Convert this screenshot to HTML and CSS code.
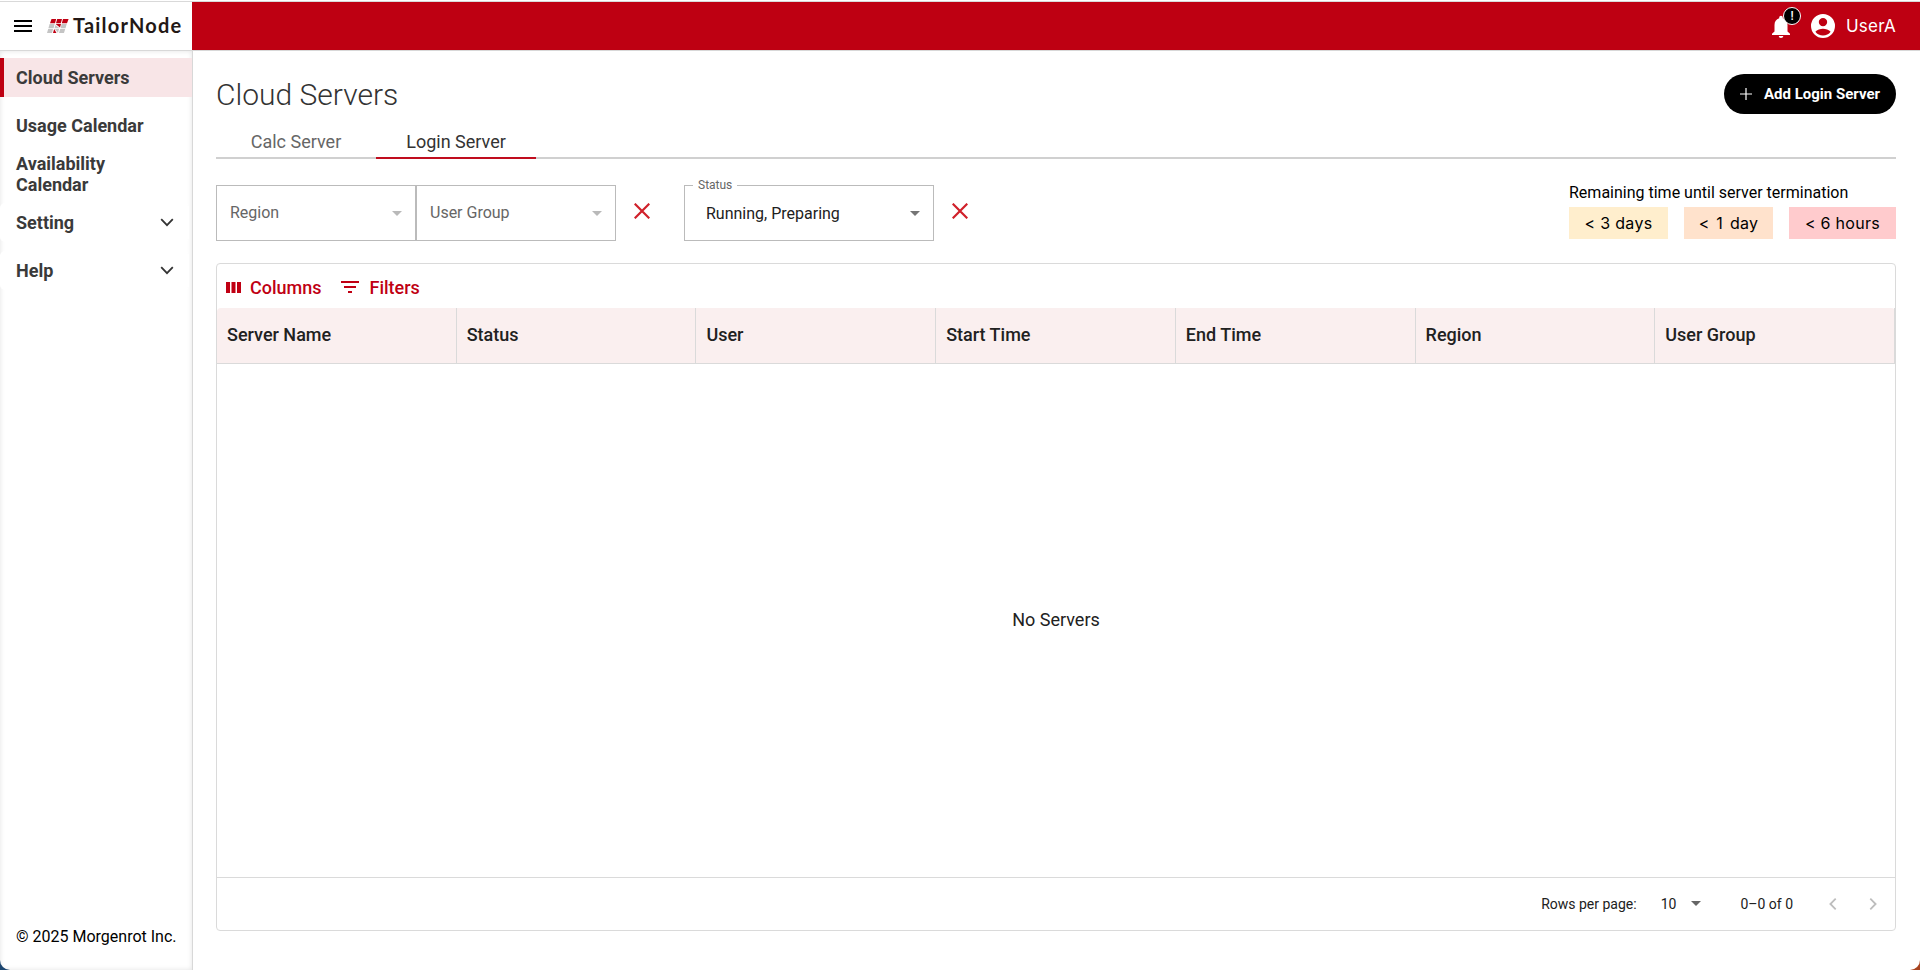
FILE: index.html
```html
<!DOCTYPE html>
<html lang="en">
<head>
<meta charset="utf-8">
<title>TailorNode</title>
<link rel="stylesheet" href="styles.css">
</head>
<body>
<div class="window">
  <header class="topbar">
    <div class="brand">
      <svg class="burger" width="18" height="12" viewBox="0 0 18 12"><path d="M0 0h18v2H0zM0 5h18v2H0zM0 10h18v2H0z"/></svg>
      <svg class="mark" width="22" height="14" viewBox="0 0 22 14">
        <path fill="#c00013" d="M4.5 0H9.2L8 4.3H3zM10.2 0H15L13.8 4.3H9zM16 0H21.6L20 4.3H14.8zM8.6 5H14L13 8.5 10.5 6.5zM7.2 10L9.5 14H6z"/>
        <path fill="#c4c4c4" d="M2.6 5H7.6L6.6 9.2H1.4zM1.2 10H6L5 14H0zM14.6 5H19.7L18.5 9.2H13.6zM13.2 10H18.2L17 14H12zM8.4 6L12.5 9.2H7.5zM8 10H12L11 14z"/>
      </svg>
      <span class="wordmark">TailorNode</span>
    </div>
    <div class="account">
      <span class="bell">
        <svg width="24" height="24" viewBox="0 0 24 24"><path d="M12 24c1.3 0 2.2-.8 2.3-2H9.700c.1 1.200 1 2 2.300 2zM18.500 17.500V11c0-3.300-1.700-6-4.700-6.700V3.500a1.800 1.800 0 0 0-3.600 0v.8C7.200 5 5.500 7.700 5.500 11v6.500L3 19.800V21h18v-1.200z"/></svg>
        <span class="alert">!</span>
      </span>
      <svg class="avatar" width="24" height="24" viewBox="0 0 24 24"><path fill-rule="evenodd" d="M12 0a12 12 0 1 0 0 24 12 12 0 0 0 0-24zm0 3.900a4.200 4.200 0 1 1 0 8.400 4.200 4.200 0 0 1 0-8.400zM12 21.600a9.500 9.500 0 0 1-7.600-3.800c1.400-2 5.200-3 7.600-3s6.200 1 7.600 3A9.500 9.500 0 0 1 12 21.600z"/></svg>
      <span class="user">UserA</span>
    </div>
  </header>
  <div class="body">
    <nav class="sidebar">
      <a class="item active">Cloud Servers</a>
      <a class="item">Usage Calendar</a>
      <a class="item two">Availability Calendar</a>
      <a class="item group">Setting <svg width="14" height="9" viewBox="0 0 14 9"><path d="M1.200 1.200L7 7.200l5.800-6"/></svg></a>
      <a class="item group">Help <svg width="14" height="9" viewBox="0 0 14 9"><path d="M1.200 1.200L7 7.200l5.800-6"/></svg></a>
      <div class="copyright">© 2025 Morgenrot Inc.</div>
    </nav>
    <main class="main">
      <div class="heading">
        <h1>Cloud Servers</h1>
        <button class="add"><svg width="12" height="12" viewBox="0 0 12 12"><path d="M6 0v12M0 6h12"/></svg>Add Login Server</button>
      </div>
      <div class="tabs"><span class="tab">Calc Server</span><span class="tab current">Login Server</span></div>
      <div class="filters">
        <div class="select plain">Region<i class="caret"></i></div>
        <div class="select plain">User Group<i class="caret"></i></div>
        <svg class="clear first" width="16" height="16" viewBox="0 0 16 16"><path d="M.7.700l14.600 14.600M15.300.700L.7 15.300"/></svg>
        <div class="select status"><span class="label">Status</span>Running, Preparing<i class="caret"></i></div>
        <svg class="clear" width="16" height="16" viewBox="0 0 16 16"><path d="M.7.700l14.600 14.600M15.300.700L.7 15.300"/></svg>
        <div class="legend">
          <div class="legend-title">Remaining time until server termination</div>
          <div class="chips"><span class="chip d3">&lt; 3 days</span><span class="chip d1">&lt; 1 day</span><span class="chip h6">&lt; 6 hours</span></div>
        </div>
      </div>
      <section class="grid">
        <div class="toolbar">
          <span class="tool columns"><svg width="15" height="11" viewBox="0 0 15 11"><path d="M0 0h4v11H0zM5.500 0h4v11h-4zM11 0h4v11h-4z"/></svg>Columns</span>
          <span class="tool"><svg width="18" height="12" viewBox="0 0 18 12"><path d="M0 0h18v2H0zM3 5h12v2H3zM7 10h4v2H7z"/></svg>Filters</span>
        </div>
        <div class="columns-head"><span>Server Name</span><span>Status</span><span>User</span><span>Start Time</span><span>End Time</span><span>Region</span><span>User Group</span></div>
        <div class="empty">No Servers</div>
        <div class="pager">
          <span class="rows">Rows per page:</span><span class="size">10</span><i class="caret"></i><span class="range">0–0 of 0</span>
          <svg class="prev" width="8" height="12" viewBox="0 0 8 12"><path d="M6.700.700L1.400 6l5.300 5.300"/></svg>
          <svg width="8" height="12" viewBox="0 0 8 12"><path d="M1.300.700L6.600 6l-5.300 5.300"/></svg>
        </div>
      </section>
    </main>
  </div>
</div>
</body>
</html>
```
FILE: styles.css
```css
* { box-sizing: border-box; }
body { margin: 0; height: 970px; overflow: hidden; background: linear-gradient(90deg, #1d4670 50%, #a8431f 50%); font-family: Roboto, "Liberation Sans", sans-serif; color: #000; }
svg { display: block; flex: none; }
.window { height: 970px; background: #fff; border-radius: 0 0 10px 10px; overflow: hidden; display: flex; flex-direction: column; padding-top: 1px; }
.topbar { height: 50px; flex: none; display: flex; border-top: 1px solid #d9d9d9; border-bottom: 1px solid #d8d8d8; background: #fff; }
.brand { width: 192px; display: flex; align-items: center; padding-left: 14px; }
.mark { margin: 0 4px 0 15px; }
.wordmark { font-family: Lato, sans-serif; font-weight: 700; font-size: 20px; letter-spacing: 1.2px; color: #231815; line-height: 24px; white-space: nowrap; margin-top: -2px; }
.account { flex: 1; background: #be0012; display: flex; align-items: center; justify-content: flex-end; padding-right: 24px; color: #fff; }
.account svg { fill: #fff; }
.bell { position: relative; margin-right: 18px; }
.alert { position: absolute; left: 14px; top: -7px; width: 18px; height: 18px; border-radius: 50%; border: 1px solid #fff; background: #000; font: 500 12px/16px Roboto, sans-serif; text-align: center; }
.user { font-family: Inter, sans-serif; font-size: 17px; line-height: 24px; letter-spacing: .2px; margin-left: 11px; width: 50px; white-space: nowrap; }
.body { flex: 1; display: flex; min-height: 0; }
.sidebar { width: 193px; border-right: 1px solid #d8d8d8; padding-top: 7px; display: flex; flex-direction: column; box-shadow: inset 0 0 5px rgba(0,0,0,.12); }
.item { height: 39px; margin-bottom: 9px; padding-left: 16px; display: flex; align-items: center; font-size: 18px; font-weight: 700; line-height: 21px; color: #3a3a3a; }
.active { background: #f8e5e7; border-left: 4px solid #be0012; padding-left: 12px; }
.two { width: 150px; height: 42px; margin: -1px 0 8px; }
.group { justify-content: space-between; background: #fff; margin-right: 3px; padding-right: 15px; border-radius: 5px; }
.group svg { fill: none; stroke: #333; stroke-width: 1.8; margin-top: -1px; }
.copyright { margin-top: auto; padding: 0 0 23px 16px; font-size: 16px; line-height: 20px; }
.main { flex: 1; padding: 23px 24px 39px 23px; display: flex; flex-direction: column; min-width: 0; }
.heading { display: flex; justify-content: space-between; align-items: flex-start; height: 50px; }
h1 { margin: 2px 0 0; font-weight: 300; font-size: 30px; line-height: 38px; color: #333; }
.add { width: 172px; height: 40px; border: 0; border-radius: 20px; background: #000; color: #fff; display: flex; align-items: center; justify-content: center; gap: 12px; font: 700 15px Roboto, sans-serif; padding: 0; }
.add svg { stroke: #fff; stroke-width: 1.2; }
.tabs { display: flex; height: 35px; border-bottom: 2px solid #d0d0d0; }
.tab { width: 160px; height: 35px; text-align: center; font-size: 18px; line-height: 35px; color: #666; }
.current { color: #333; border-bottom: 2px solid #c00d1e; }
.filters { display: flex; margin-top: 26px; height: 78px; }
.select { position: relative; width: 200px; height: 56px; border: 1px solid #bbb; display: flex; align-items: center; justify-content: space-between; padding: 0 13px; font-size: 16px; color: #666; }
.plain { padding-bottom: 2px; }
.plain .caret { margin-top: 2px; }
.caret { border: 5px solid transparent; border-top-color: #b9b9b9; border-bottom: 0; width: 0; }
.clear { margin: 18px 0 0 18px; stroke: #d0202a; stroke-width: 2.2; }
.first { margin-right: 34px; }
.status { width: 250px; padding-left: 21px; color: #212121; }
.status .caret { border-top-color: #757575; }
.label { position: absolute; top: -9px; left: 8px; padding: 0 5px; background: #fff; font-size: 12px; line-height: 16px; color: #666; }
.legend { margin-left: auto; width: 327px; }
.legend-title { font-size: 16px; line-height: 16px; }
.chips { display: flex; gap: 16px; margin-top: 6px; }
.chip { height: 32px; display: flex; align-items: center; justify-content: center; font-family: Inter, sans-serif; font-size: 16px; line-height: 24px; letter-spacing: .3px; font-weight: 400; white-space: nowrap; }
.d3 { width: 99px; background: #ffeecd; }
.d1 { width: 89px; background: #ffe2cc; word-spacing: 2px; }
.h6 { width: 107px; background: #ffcbcd; }
.grid { flex: 1; border: 1px solid #dadada; border-radius: 4px; display: flex; flex-direction: column; overflow: hidden; }
.toolbar { height: 44px; display: flex; align-items: center; padding: 2px 0 0 9px; }
.tool { display: flex; align-items: center; gap: 11px; color: #c00013; font-size: 18px; font-weight: 500; }
.tool svg { fill: #c00013; }
.columns { gap: 9px; margin-right: 19px; }
.columns-head { height: 56px; background: #faefef; border-bottom: 1px solid #dadada; border-radius: 4px 4px 0 0; display: grid; grid-template-columns: repeat(7, 1fr); }
.columns-head span { padding-left: 10px; border-right: 1px solid #dadada; font-size: 18px; font-weight: 500; line-height: 54px; color: #212121; }
.empty { flex: 1; display: flex; align-items: center; justify-content: center; padding-bottom: 3px; font-size: 18px; color: #212121; }
.pager { height: 53px; flex: none; border-top: 1px solid #dadada; display: flex; align-items: center; justify-content: flex-end; padding: 0 18px 1px 0; font-size: 14px; color: #212121; }
.pager .caret { border-top-color: #666; margin: 0 39px 0 15px; }
.size { margin-left: 24px; }
.pager svg { fill: none; stroke: #bdbdbd; stroke-width: 1.8; }
.prev { margin: 0 32px 0 36px; }
```
